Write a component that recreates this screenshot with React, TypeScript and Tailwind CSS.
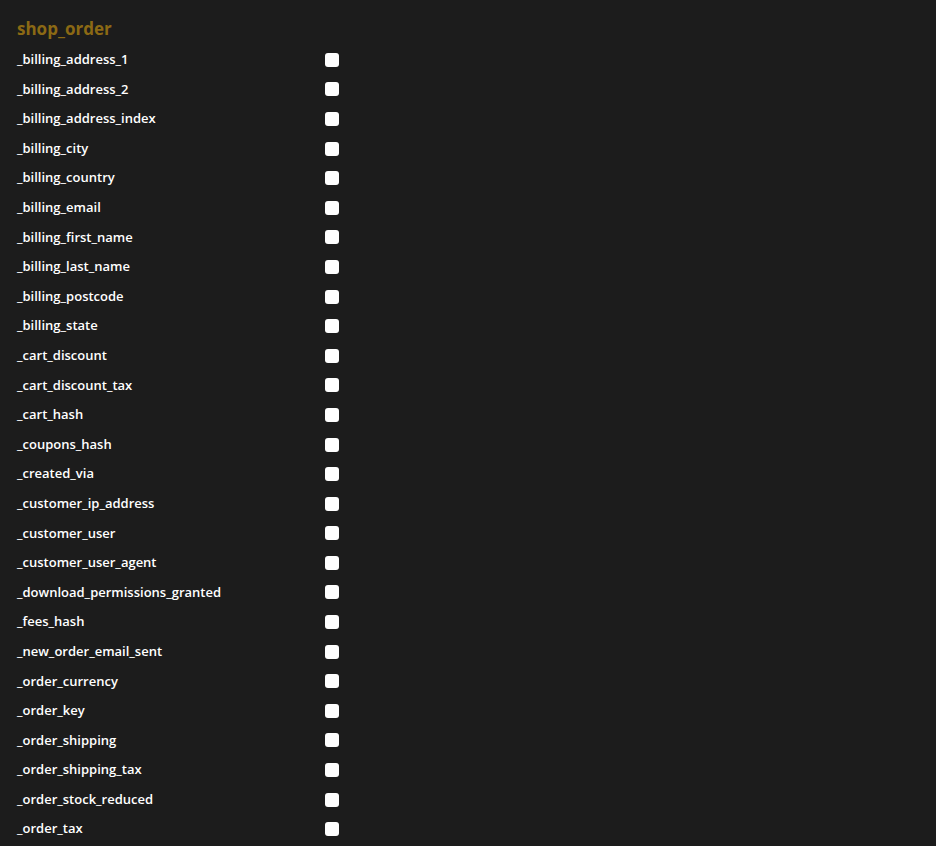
import React from 'react';

const fields = [
  '_billing_address_1',
  '_billing_address_2',
  '_billing_address_index',
  '_billing_city',
  '_billing_country',
  '_billing_email',
  '_billing_first_name',
  '_billing_last_name',
  '_billing_postcode',
  '_billing_state',
  '_cart_discount',
  '_cart_discount_tax',
  '_cart_hash',
  '_coupons_hash',
  '_created_via',
  '_customer_ip_address',
  '_customer_user',
  '_customer_user_agent',
  '_download_permissions_granted',
  '_fees_hash',
  '_new_order_email_sent',
  '_order_currency',
  '_order_key',
  '_order_shipping',
  '_order_shipping_tax',
  '_order_stock_reduced',
  '_order_tax',
];

const App: React.FC = () => {
  return (
    <div className="w-[936px] h-[846px] overflow-hidden bg-[#1c1c1c] px-[17px] pt-[17px] font-['Open_Sans',sans-serif]">
      <h2 className="text-[17px] leading-[24px] font-bold text-[#8b6914] mb-[4px]">shop_order</h2>
      <div className="flex flex-col">
        {fields.map((f) => (
          <label key={f} className="flex items-center h-[29.6px]">
            <span className="w-[308px] text-[13px] font-semibold text-white">{f}</span>
            <span className="w-[14px] h-[14px] rounded-[3px] bg-white" />
          </label>
        ))}
      </div>
    </div>
  );
};

export default App;
